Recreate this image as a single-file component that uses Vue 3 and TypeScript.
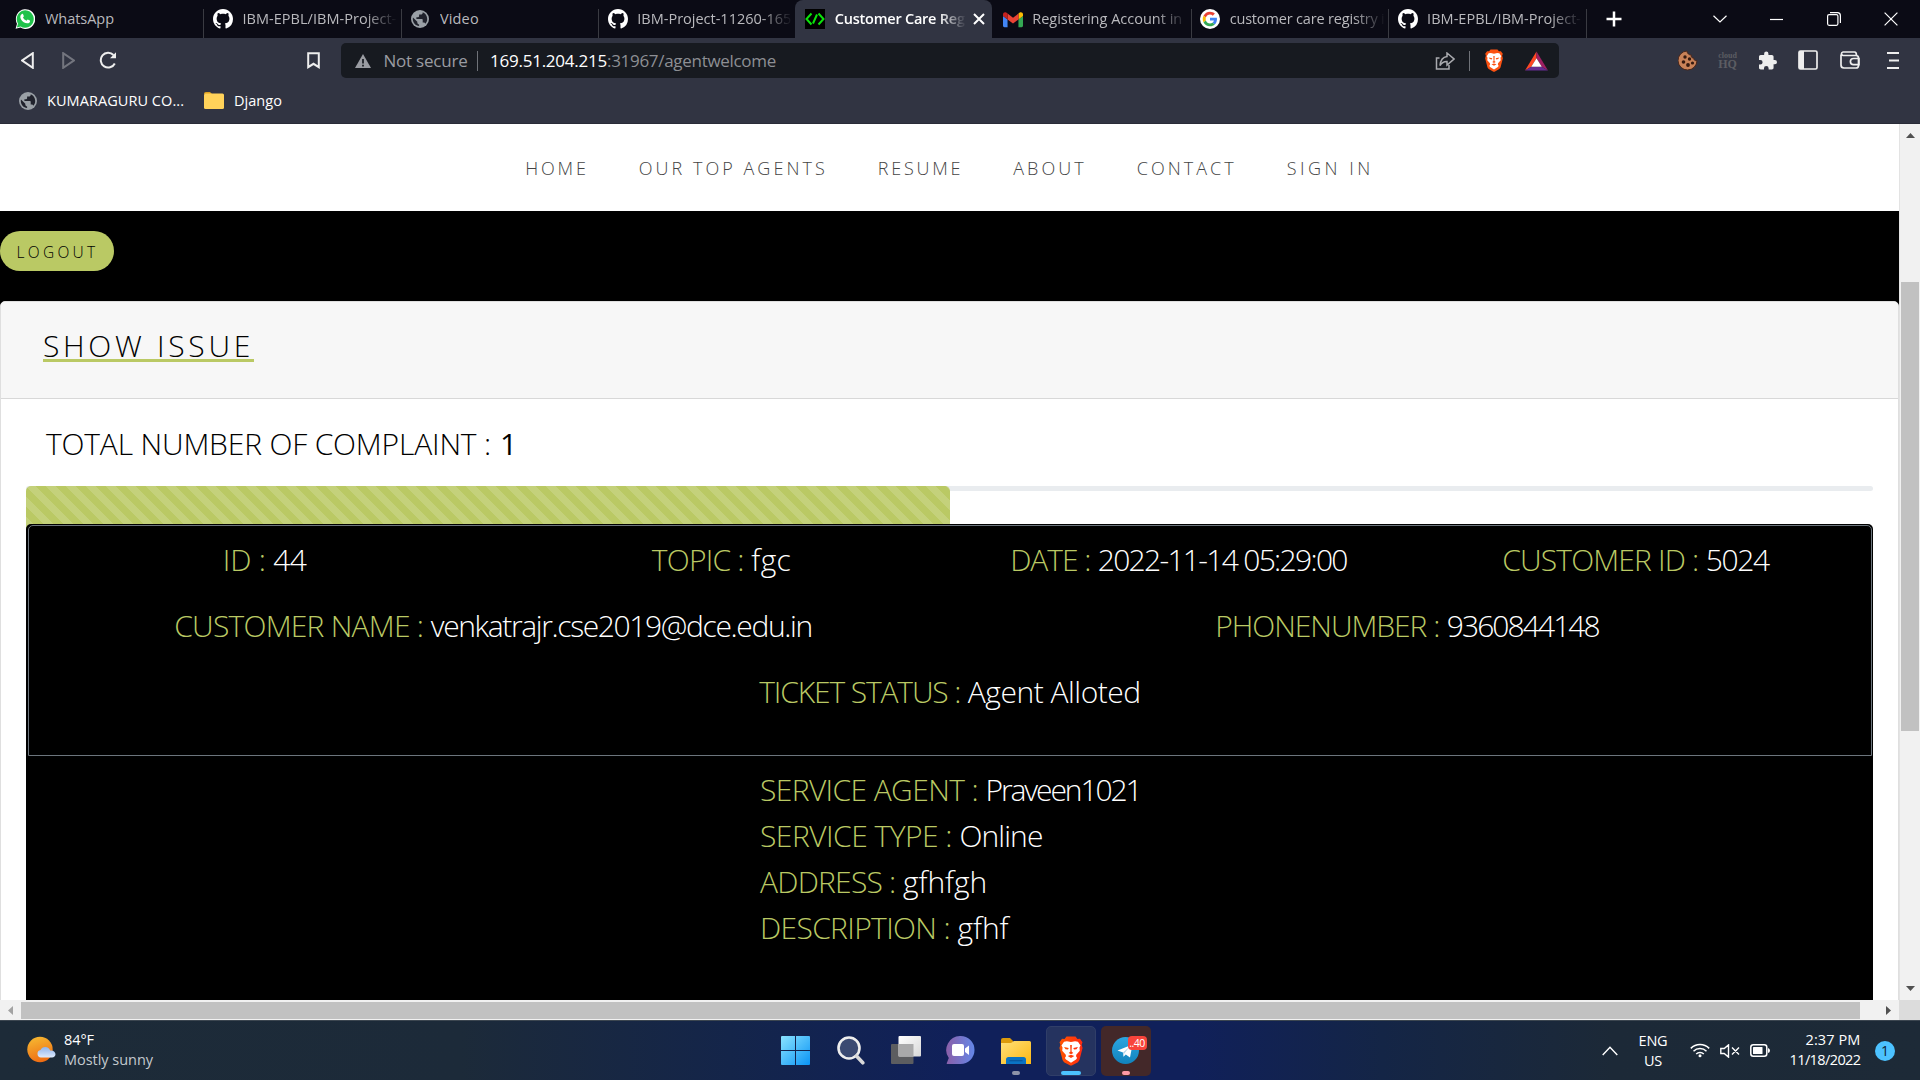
<script setup lang="ts">
import type { Directive } from 'vue'

/* Tracks a run of text so that it fills the given width in pixels. */
const vFit: Directive<HTMLElement, number> = {
  mounted(el, binding) {
    const length = el.textContent?.length ?? 0
    if (!length) return
    const natural = el.getBoundingClientRect().width
    el.style.letterSpacing = `${(binding.value - natural) / length}px`
  },
}

interface Tab {
  icon: string
  title: string
  width: number
  active?: boolean
  fade?: boolean
}

const tabs: Tab[] = [
  { icon: 'whatsapp', title: 'WhatsApp', width: 69 },
  { icon: 'github', title: 'IBM-EPBL/IBM-Project-', width: 154, fade: true },
  { icon: 'globe', title: 'Video', width: 39 },
  { icon: 'github', title: 'IBM-Project-11260-165', width: 154, fade: true },
  { icon: 'code', title: 'Customer Care Reg', width: 130, active: true, fade: true },
  { icon: 'gmail', title: 'Registering Account in', width: 150, fade: true },
  { icon: 'google', title: 'customer care registry i', width: 155, fade: true },
  { icon: 'github', title: 'IBM-EPBL/IBM-Project-', width: 154, fade: true },
]

const links = [
  { text: 'HOME', width: 63.5 },
  { text: 'OUR TOP AGENTS', width: 189 },
  { text: 'RESUME', width: 85.5 },
  { text: 'ABOUT', width: 73.5 },
  { text: 'CONTACT', width: 100 },
  { text: 'SIGN IN', width: 87 },
]

interface Field {
  label: string
  value: string
  lw: number
  vw: number
}

const rows: Field[][] = [
  [
    { label: 'ID :', value: '44', lw: 43, vw: 33 },
    { label: 'TOPIC :', value: 'fgc', lw: 92, vw: 40 },
    { label: 'DATE :', value: '2022-11-14 05:29:00', lw: 80, vw: 249 },
    { label: 'CUSTOMER ID :', value: '5024', lw: 196, vw: 63 },
  ],
  [
    { label: 'CUSTOMER NAME :', value: 'venkatrajr.cse2019@dce.edu.in', lw: 249, vw: 381 },
    { label: 'PHONENUMBER :', value: '9360844148', lw: 224, vw: 152 },
  ],
  [{ label: 'TICKET STATUS :', value: 'Agent Alloted', lw: 201, vw: 173 }],
]

const service: Field[] = [
  { label: 'SERVICE AGENT :', value: 'Praveen1021', lw: 218, vw: 155 },
  { label: 'SERVICE TYPE :', value: 'Online', lw: 192, vw: 83 },
  { label: 'ADDRESS :', value: 'gfhfgh', lw: 135.5, vw: 84 },
  { label: 'DESCRIPTION :', value: 'gfhf', lw: 190, vw: 51 },
]
</script>

<template>
  <div class="screen">
    <svg width="0" height="0" class="defs">
      <defs>
        <linearGradient id="win" x1="0" y1="0" x2="1" y2="1">
          <stop offset="0" stop-color="#8ae3ff" /><stop offset="1" stop-color="#0a94f5" />
        </linearGradient>
        <linearGradient id="sun" x1=".3" y1="0" x2=".6" y2="1">
          <stop offset="0" stop-color="#f6b731" /><stop offset="1" stop-color="#ee6a12" />
        </linearGradient>
        <linearGradient id="cloud" x1="0" y1="0" x2="0" y2="1">
          <stop offset="0" stop-color="#8fb4ee" /><stop offset="1" stop-color="#dfeafc" />
        </linearGradient>
        <linearGradient id="chat" x1="0" y1="0" x2="1" y2="0">
          <stop offset="0" stop-color="#8a5fa8" /><stop offset="1" stop-color="#6487e8" />
        </linearGradient>
        <linearGradient id="fold" x1="0" y1="0" x2="1" y2="1">
          <stop offset="0" stop-color="#ffe07a" /><stop offset="1" stop-color="#fdb813" />
        </linearGradient>
        <linearGradient id="tg" x1="0" y1="0" x2="0" y2="1">
          <stop offset="0" stop-color="#2ca5e0" /><stop offset="1" stop-color="#1183bd" />
        </linearGradient>
        <linearGradient id="tv" x1="0" y1="0" x2="1" y2="1">
          <stop offset="0" stop-color="#fff" /><stop offset="1" stop-color="#d8d8d8" />
        </linearGradient>
        <linearGradient id="lionbg" x1="0" y1="0" x2="1" y2="0">
          <stop offset="0" stop-color="#ff5500" /><stop offset="1" stop-color="#ff2a12" />
        </linearGradient>
        <symbol id="lion" viewBox="0 0 24 28">
          <path d="M6 2.800 7.800.5h8.400L18 2.800l2.400-.2 2.300 3.200-.8 2.300.9 3.200-2.900 11.200-1.400 1.900-5.800 3.200h-1.400l-5.800-3.200-1.400-1.900L1.200 11.300l.9-3.200-.8-2.300 2.300-3.200z" />
          <path fill="#fff" d="M8.200 5 12 5.700l3.800-.7 2.700.3 2.400 3.500-1 2 .3 2.900-3.300 3.700-.2 1.600 1 1.600-1 1.400L12 25l-4.700-3-1-1.400 1-1.600-.2-1.600-3.300-3.700.3-2.900-1-2 2.400-3.500z" />
          <path d="m5.500 10.300 4.400.9-.7 1.500-2.300-.4zM18.500 10.300l-4.400.9.7 1.500 2.300-.4zM11.200 8.500h1.600l-.3 6 1.600 1.300-2.100 1.200-2.100-1.200 1.600-1.300zM8.900 18.600l3.100-1 3.100 1-3.100 1.900z" />
        </symbol>
        <symbol id="globe" viewBox="2 2 20 20">
          <circle cx="12" cy="12" r="10" fill="#9aa0a6" />
          <path class="land" d="M11 19.900c-4-.5-7-3.800-7-7.900 0-.6.100-1.200.200-1.800L9 15v1c0 1.100.9 2 2 2zM17.900 17.400c-.3-.8-1-1.400-1.900-1.400h-1v-3c0-.5-.4-1-1-1H8v-2h2c.5 0 1-.4 1-1V7h2c1.100 0 2-.9 2-2v-.4c2.900 1.200 5 4.100 5 7.400 0 2.100-.8 4-2.100 5.400z" />
        </symbol>
      </defs>
    </svg>

    <header class="tabs">
      <div v-for="(t, i) in tabs" :key="i" class="tab" :class="{ active: t.active, nosep: i === 3, first: i === 0 }">
        <svg v-if="t.icon === 'whatsapp'" class="fav" viewBox="0 0 20 20">
          <path d="M.6 19.800 2 14.700A9.700 9.900 0 1 1 5.500 18.500z" fill="#fff" />
          <path d="M1.900 18.500 3 14.600A8.500 8.700 0 1 1 5.700 17.400z" fill="#1fc24a" />
          <path d="M6.600 5.200c.9-.6 1.300-.4 1.600.4l.6 1.500c.2.6-.7 1.100-.8 1.500.7 1.500 1.900 2.500 3.400 3.100.5-.1.900-1.200 1.400-1.100l2.100 1c.4.3.1 1.600-.5 2.100-2.500 1.900-6.900-.7-8.300-3.200C5 8.600 4.900 6.400 6.600 5.200z" fill="#fff" />
        </svg>
        <svg v-else-if="t.icon === 'github'" class="fav" viewBox="0 0 16 16">
          <path fill="#fff" d="M8 0C3.580 0 0 3.580 0 8c0 3.540 2.290 6.530 5.470 7.590.4.070.55-.17.55-.38 0-.19-.01-.82-.01-1.490-2.010.37-2.530-.49-2.690-.94-.09-.23-.48-.94-.82-1.130-.28-.15-.68-.52-.01-.53.63-.01 1.080.58 1.230.82.72 1.210 1.870.87 2.330.66.070-.52.280-.87.510-1.070-1.780-.2-3.640-.89-3.640-3.950 0-.87.310-1.590.820-2.150-.08-.2-.36-1.020.080-2.120 0 0 .67-.21 2.200.82.640-.18 1.320-.27 2-.27s1.360.09 2 .27c1.530-1.040 2.200-.82 2.200-.82.440 1.100.160 1.920.080 2.120.510.560.820 1.270.820 2.150 0 3.070-1.870 3.750-3.650 3.950.290.250.540.730.540 1.480 0 1.070-.01 1.930-.01 2.200 0 .21.150.46.550.38A8.010 8.010 0 0 0 16 8c0-4.420-3.580-8-8-8z" />
        </svg>
        <svg v-else-if="t.icon === 'globe'" class="fav globe-fav"><use href="#globe" /></svg>
        <svg v-else-if="t.icon === 'code'" class="fav" viewBox="0 0 20 20">
          <rect width="20" height="20" />
          <path d="M6.500 4.500 1.500 10l5 5.500M13.500 4.500l5 5.500-5 5.500M12 5.500 8 14.500" fill="none" stroke="#0be30b" stroke-width="2" />
        </svg>
        <svg v-else-if="t.icon === 'gmail'" class="fav" viewBox="52 36 88 72">
          <path fill="#4285f4" d="M58 108h14V74L52 59v43c0 3.320 2.690 6 6 6" />
          <path fill="#34a853" d="M120 108h14c3.320 0 6-2.690 6-6V59l-20 15" />
          <path fill="#fbbc04" d="M120 48v26l20-15v-8c0-7.420-8.470-11.650-14.400-7.200" />
          <path fill="#ea4335" d="M72 74V48l24 18 24-18v26L96 92" />
          <path fill="#c5221f" d="M52 51v8l20 15V48l-5.600-4.200c-5.940-4.450-14.400-.22-14.400 7.200" />
        </svg>
        <svg v-else class="fav" viewBox="-9 -9 66 66">
          <circle cx="24" cy="24" r="33" fill="#fff" />
          <path fill="#ea4335" d="M24 9.500c3.540 0 6.710 1.220 9.210 3.600l6.850-6.850C35.900 2.380 30.470 0 24 0 14.620 0 6.510 5.380 2.560 13.220l7.980 6.190C12.430 13.720 17.740 9.500 24 9.500z" />
          <path fill="#4285f4" d="M46.980 24.550c0-1.570-.15-3.090-.38-4.550H24v9.020h12.940c-.58 2.960-2.260 5.480-4.780 7.180l7.730 6c4.510-4.180 7.090-10.360 7.090-17.650z" />
          <path fill="#fbbc05" d="M10.530 28.590c-.48-1.450-.76-2.990-.76-4.590s.27-3.140.76-4.590l-7.980-6.190C.92 16.460 0 20.120 0 24c0 3.880.92 7.540 2.560 10.780l7.970-6.190z" />
          <path fill="#34a853" d="M24 48c6.480 0 11.930-2.130 15.890-5.810l-7.730-6c-2.150 1.450-4.920 2.300-8.160 2.300-6.260 0-11.570-4.220-13.470-9.910l-7.980 6.190C6.510 42.620 14.620 48 24 48z" />
        </svg>
        <div class="title" :class="{ fade: t.fade }"><span v-fit="t.width">{{ t.title }}</span></div>
        <svg v-if="t.active" class="x" viewBox="0 0 12 12"><path d="m1 1 10 10M11 1 1 11" stroke="#fff" stroke-width="2" /></svg>
      </div>
      <svg class="plus" viewBox="0 0 16 16"><path d="M8 .5v15M.5 8h15" stroke="#fff" stroke-width="2.500" /></svg>
      <div class="winctl">
        <svg width="14" height="8" viewBox="0 0 14 8"><path d="m.5.7 6.500 6.300L13.500.7" /></svg>
        <svg width="14" height="14" viewBox="0 0 14 14"><path d="M0 7.500h13" /></svg>
        <svg width="14" height="14" viewBox="0 0 14 14"><rect x=".6" y="2.600" width="10.300" height="10.700" rx="1.500" /><path d="M3 .7h7.500a3 3 0 0 1 2.900 3V11" /></svg>
        <svg width="14" height="14" viewBox="0 0 14 14"><path d="m.6.6 12.800 12.800M13.400.6.6 13.400" /></svg>
      </div>
    </header>

    <div class="toolbar">
      <svg class="back" viewBox="0 0 13 17"><path d="M11.800 1.200v14.600L1.200 8.500z" /></svg>
      <svg class="fwd" viewBox="0 0 13 17"><path d="M1.200 1.200v14.600l10.600-7.300z" /></svg>
      <svg class="reload" viewBox="0 0 18 18"><path d="M15.800 12.500A7.400 7.400 0 1 1 14.500 4" /><path d="M17 1.200v6h-6z" fill="#eee" stroke="none" /></svg>
      <svg class="bm" viewBox="0 0 13 17"><path d="M1.200 1.200h10.600v14L6.500 11.800 1.200 15.200z" /></svg>
      <div class="omni">
        <svg class="warn" viewBox="0 0 16 14"><path d="M8 0l8 14H0z" fill="#9a9ca2" /><path d="M8 5v4.500M8 10.800v1.600" stroke="#171a20" stroke-width="1.700" /></svg>
        <span class="ns" v-fit="84">Not secure</span>
        <i class="bar b1"></i>
        <span class="host" v-fit="117">169.51.204.215</span><span class="path" v-fit="169">:31967/agentwelcome</span>
        <svg class="share" viewBox="0 0 20 18"><path d="M4.500 6H1.500v11h12.500v-4M12 1l7 6-7 6V9.500C9 9.300 7 10.500 5 13.500 5.500 8.500 8 5 12 4.500z" /></svg>
        <i class="bar b2"></i>
        <svg class="lion-s" fill="#fb5212"><use href="#lion" /></svg>
        <svg class="bat" viewBox="0 0 24 20"><path d="M12 0 0 20l6.500-4L12 7z" fill="#ff4724" /><path d="m12 0 12 20-6.500-4L12 7z" fill="#9e1f63" /><path d="M0 20h24l-6.500-4h-11z" fill="#662d91" /><path d="M12 7l5.500 9h-11z" fill="#fff" /></svg>
      </div>
      <div class="ext">
        <svg width="20" height="21" viewBox="0 0 20 21"><path d="M9 1a9.500 9.500 0 1 0 10 9.500c-2 .6-3.300-.5-3.200-2.400-2 0-3-1.300-2.500-3C11 5 9 3.500 9 1z" fill="#c98258" stroke="#49261a" /><g fill="#35190f"><circle cx="7" cy="7" r="1.700" /><circle cx="11.500" cy="9" r="1.700" /><circle cx="5.500" cy="12" r="1.800" /><circle cx="10" cy="15" r="1.900" /><circle cx="14.500" cy="13" r="1.600" /></g></svg>
        <div class="chq"><span>cloud</span><b>HQ</b></div>
        <svg class="puzzle" width="18" height="19" viewBox="2 1 21 21"><path fill="#eee" d="M20.500 11H19V7c0-1.100-.9-2-2-2h-4V3.500a2.500 2.500 0 0 0-5 0V5H4c-1.100 0-2 .9-2 2v3.800h1.500a2.700 2.700 0 0 1 0 5.400H2V20c0 1.100.9 2 2 2h3.800v-1.500a2.700 2.700 0 0 1 5.400 0V22H17c1.100 0 2-.9 2-2v-4h1.500a2.500 2.500 0 0 0 0-5z" /></svg>
        <svg class="side" width="20" height="20" viewBox="0 0 20 20"><rect x="1" y="1" width="18" height="18" rx="1.500" fill="none" stroke="#eee" stroke-width="1.700" /><path d="M1 1h5v18H1z" fill="#eee" /></svg>
        <svg class="wallet" width="20" height="18" viewBox="0 0 20 18" fill="none" stroke="#eee" stroke-width="1.700"><path d="M1 3.500V14c0 2 1 3 3 3h12c1.500 0 2.500-1 2.500-2.500V7c0-1.500-1-2.500-2.500-2.500H3A2 1.800 0 0 1 3 1h11.500c1.500 0 2 1 2 3.500M19 7.500h-5.500a3 3 0 0 0 0 6.200H19z" /></svg>
        <svg class="menu" width="12" height="17" viewBox="0 0 12 17"><path d="M0 1h12M2 8.500h10M0 16h12" stroke="#eee" stroke-width="1.800" /></svg>
      </div>
    </div>

    <div class="bookmarks">
      <svg class="bglobe"><use href="#globe" /></svg>
      <span class="bt1" v-fit="137">KUMARAGURU CO...</span>
      <svg class="bfold" viewBox="0 0 20 17"><path d="M0 2c0-1.300.7-2 2-2h4l2 2H0z" fill="#dda020" /><rect y="1.500" width="20" height="15.500" rx="1.500" fill="#ffd25a" /></svg>
      <span v-fit="48">Django</span>
    </div>

    <div class="view">
      <main class="page">
        <nav>
          <a v-for="l in links" :key="l.text" v-fit="l.width">{{ l.text }}</a>
        </nav>
        <section class="band">
          <button><span v-fit="82">LOGOUT</span></button>
        </section>
        <section class="card">
          <div class="head"><h2 v-fit="211">SHOW ISSUE</h2></div>
          <div class="body">
            <div class="total"><span v-fit="445">TOTAL NUMBER OF COMPLAINT :</span><b>1</b></div>
            <div class="progress"><div class="fill"></div></div>
            <div class="ticket">
              <div class="summary">
                <div v-for="(r, i) in rows" :key="i" class="row">
                  <div v-for="f in r" :key="f.label" class="cell">
                    <span class="label" v-fit="f.lw">{{ f.label }}</span><span class="value" v-fit="f.vw">{{ f.value }}</span>
                  </div>
                </div>
              </div>
              <div class="service">
                <div v-for="f in service" :key="f.label" class="line">
                  <span class="label" v-fit="f.lw">{{ f.label }}</span><span class="value" v-fit="f.vw">{{ f.value }}</span>
                </div>
              </div>
            </div>
          </div>
        </section>
      </main>
      <aside class="vbar">
        <svg viewBox="0 0 9 5"><path d="M4.500 0 9 5H0z" fill="#505050" /></svg>
        <i></i>
        <svg viewBox="0 0 9 5"><path d="M4.500 5 9 0H0z" fill="#505050" /></svg>
      </aside>
    </div>

    <div class="hbar">
      <svg class="la" viewBox="0 0 5 9"><path d="M0 4.500 5 0v9z" fill="#a3a3a3" /></svg>
      <i></i>
      <svg class="ra" viewBox="0 0 5 9"><path d="M5 4.500 0 0v9z" fill="#505050" /></svg>
      <div class="corner"></div>
    </div>

    <footer class="taskbar">
      <div class="weather">
        <svg width="29" height="28" viewBox="0 0 29 28"><circle cx="13" cy="13.500" r="12.700" fill="url(#sun)" /><path d="M14 21.500a3.800 3.800 0 0 1-.5-7.500 5.200 5.200 0 0 1 9.600.5c3.500-.5 5.400 1.800 5.400 3.800s-1.500 3.200-3.500 3.200z" fill="url(#cloud)" /></svg>
        <div><span v-fit="30">84°F</span><span class="dim" v-fit="89">Mostly sunny</span></div>
      </div>
      <div class="apps">
        <div class="app"><svg width="29" height="29" viewBox="0 0 29 29"><path fill="url(#win)" d="M1 0h13v14H0V1q0-1 1-1zM15 0h13q1 0 1 1v13H15zM0 15h14v14H1q-1 0-1-1zM15 15h14v13q0 1-1 1H15z" /></svg></div>
        <div class="app"><svg width="28" height="29" viewBox="0 0 28 29"><circle cx="12" cy="12" r="10.500" fill="#3b4a72" stroke="#eee" stroke-width="2.600" /><path d="m19.500 20 6.300 6.800" stroke="#d9d9d9" stroke-width="3.600" stroke-linecap="round" /></svg></div>
        <div class="app"><svg width="30" height="29" viewBox="0 0 30 29"><rect y="8" width="22.500" height="20" rx="1" fill="#5c5d60" /><rect x="7.500" width="22.500" height="20.500" rx="1" fill="url(#tv)" /><path d="M7.500 8h15v12.500h-15z" fill="#a9a9aa" /></svg></div>
        <div class="app"><svg width="29" height="29" viewBox="0 0 29 29"><path d="M14.500 0a14 14 0 1 1 0 28H1.500Q.2 28 1 26.500L2.800 22A14 14 0 0 1 14.500 0z" fill="url(#chat)" /><rect x="6" y="8" width="12" height="12" rx="2" fill="#fff" /><path d="m19 12.500 4-3v9.500l-4-3z" fill="#fff" /></svg></div>
        <div class="app"><svg width="30" height="26" viewBox="0 0 30 26"><path d="M0 2q0-2 2-2h7l3.500 3.500L10 7H0z" fill="#dc9a0c" /><path d="M0 5h10l3-2h15.500Q30 3 30 4.500V26H0z" fill="url(#fold)" /><path d="M5 26v-4.500q0-2.500 2.500-2.500h15q2.500 0 2.500 2.500V26z" fill="#0a73c4" /><path d="M8.500 22.700h13" stroke="#0a559b" stroke-width="1.200" /></svg><i class="pill"></i></div>
        <div class="app on"><svg width="26" height="30" fill="url(#lionbg)"><use href="#lion" /></svg><i class="pill wide"></i></div>
        <div class="app alert"><svg class="tgi" width="27" height="27" viewBox="0 0 27 27"><circle cx="13.500" cy="13.500" r="13.500" fill="url(#tg)" /><path d="M5.500 13.500 20.500 7.500 18 20.500l-4.200-3-2.300 2.300-.5-4.200z" fill="#fff" /><path d="m11 15.600 7-6.300-5.700 7.200-.8 3.300z" fill="#b7d7ea" /></svg><i class="pill pink"></i><span class="badge">..40</span></div>
      </div>
      <div class="tray">
        <svg class="up" viewBox="0 0 16 10"><path d="m.7 9 7.300-7.800L15.300 9" fill="none" stroke="#fff" stroke-width="1.400" /></svg>
        <div class="lang"><span v-fit="29">ENG</span><span v-fit="18">US</span></div>
        <svg class="wifi" viewBox="0 0 20 15" fill="none" stroke="#fff" stroke-width="1.500"><path d="M.8 5.400a13 13 0 0 1 18.400 0M3.500 8.300a9.200 9.200 0 0 1 13 0M6.200 11a5.400 5.400 0 0 1 7.600 0" /><circle cx="10" cy="12.700" r="1.500" fill="#fff" stroke="none" /></svg>
        <svg class="vol" viewBox="0 0 20 14" fill="none" stroke="#fff" stroke-width="1.400"><path d="M.8 4.500h3.400L8.500.9v12.200L4.200 9.500H.8zM12 3.500l7 7M19 3.500l-7 7" /></svg>
        <svg class="batt" viewBox="0 0 20 13"><rect x=".8" y=".8" width="16" height="11.400" rx="2.500" fill="none" stroke="#fff" stroke-width="1.500" /><rect x="3" y="3" width="9.500" height="7" rx=".6" fill="#fff" /><path d="M18 4v5q2-.5 2-2.500T18 4z" fill="#fff" /></svg>
        <div class="clock"><span v-fit="55">2:37 PM</span><span v-fit="71">11/18/2022</span></div>
        <div class="note">1</div>
      </div>
    </footer>
  </div>
</template>

<style>
body { margin: 0; overflow: hidden; }
</style>

<style scoped>
.screen {
  width: 1920px; height: 1080px; overflow: hidden;
  display: flex; flex-direction: column;
  font-family: "Open Sans", "Noto Sans", sans-serif; font-size: 14.500px;
  background: #313442; color: #fff;
}
.screen * { box-sizing: border-box; }
.defs { position: absolute; }
svg { display: block; flex: none; }
span, a, h2 { white-space: pre; flex: none; }
.land { fill: #20222c; }

.tabs { height: 38px; flex: none; background: #0b0b15; display: flex; padding-left: 6px; }
.tab { width: 197.450px; height: 38px; flex: none; display: flex; align-items: center; padding-left: 9.500px; color: #b9b9bd; position: relative; }
.tab::after { content: ""; width: 1px; height: 29px; background: #3a3b42; position: absolute; right: -1px; bottom: 0; }
.tab.first { padding-left: 8.500px; }
.tab.first .title { margin-left: 10.500px; }
.tab.active { background: #313442; border-radius: 8px 8px 0 0; color: #fff; font-weight: 600; margin-left: -1px; margin-right: 1px; padding-left: 10.500px; }
.tab.active::after, .tab.nosep::after { display: none; }
.fav { width: 20px; height: 20px; }
.globe-fav { width: 18px; height: 18px; margin: 0 1px; }
.title { margin-left: 9.500px; width: 154px; overflow: hidden; line-height: 22px; }
.fade { mask-image: linear-gradient(90deg, #000 80%, transparent 101%); }
.active .title { width: 130px; }
.x { width: 12px; height: 12px; margin-left: 8px; }
.plus { width: 16px; height: 16px; margin: 11px 0 0 20px; }
.winctl { margin-left: auto; padding-right: 22px; display: flex; gap: 43px; align-items: center; fill: none; stroke: #fff; stroke-width: 1.200; }

.toolbar { height: 44px; flex: none; display: flex; align-items: center; padding-left: 21px; }
.toolbar > svg { fill: none; stroke: #eee; stroke-width: 2; }
.back, .fwd, .bm { width: 13px; height: 17px; }
.fwd { margin-left: 28px; opacity: .35; }
.reload { width: 18px; height: 18px; margin-left: 24px; }
.bm { margin-left: 190px; }
.omni { width: 1218px; height: 35px; margin: 1px 0 0 21px; background: #171a20; border-radius: 5px; display: flex; align-items: center; font-size: 17px; padding-left: 14px; }
.warn { width: 16px; height: 14px; margin-top: 1px; }
.ns { margin-left: 12.500px; color: #9a9ca2; }
.bar { width: 1.500px; height: 20px; background: #6f7278; flex: none; }
.b1 { margin: 0 12px 0 9px; }
.path { color: #8d8f94; }
.share { width: 20px; height: 18px; margin-left: auto; fill: none; stroke: #a9aaae; stroke-width: 1.500; }
.b2 { margin: 0 14px; }
.lion-s { width: 20px; height: 23px; }
.bat { width: 23px; height: 20px; margin: 0 11px 0 21px; }
.ext { margin-left: auto; padding-right: 21.500px; display: flex; align-items: center; }
.chq { margin: 0 20.500px 0 19px; }
.side { margin-left: 21px; }
.wallet { margin: 0 26.500px 0 22px; }
.chq { width: 22px; font-family: "Liberation Serif", serif; color: #5c5d62; display: flex; flex-direction: column; align-items: center; font-weight: 700; }
.chq span { font-size: 8px; line-height: 7px; }
.chq b { font-size: 12px; line-height: 10px; }

.bookmarks { height: 42px; flex: none; display: flex; align-items: center; padding: 0 0 4px 19px; border-bottom: 1px solid #292b37; }
.bglobe { width: 18px; height: 18px; }
.bt1 { margin: 0 20px 0 10px; }
.bfold { width: 20px; height: 17px; margin-right: 10px; }

.view { height: 876px; flex: none; display: flex; }
.page { width: 1899px; height: 876px; overflow: hidden; background: #fff; color: #000; font-weight: 300; }
nav { height: 87px; display: flex; justify-content: center; align-items: center; gap: 50px; padding-top: 1px; }
nav a { font-size: 18px; color: #444; }
.band { height: 90px; background: #000; padding-top: 20px; }
button { display: flex; align-items: center; width: 114px; height: 40px; border: 0; border-radius: 20px; background: #bac964; font: inherit; font-size: 15.500px; padding: 1px 0 0 16.500px; color: #000; }
.card { background: #fff; border: 1px solid #dfdfdf; border-radius: 5px; height: 720px; box-shadow: 0 -6px 0 0 #000; }
.head { height: 97px; background: #f7f7f7; border-bottom: 1px solid #d8d8d8; padding: 23px 0 0 42px; border-radius: 4px 4px 0 0; }
h2 { display: inline-block; margin: 0; font-size: 30px; font-weight: 300; line-height: 41px; border-bottom: 3px solid #bac964; height: 37px; }
.body { padding: 0 25px; }
.total { height: 87px; font-size: 30px; line-height: 90px; padding-left: 20px; display: flex; }
.total b { font-weight: 400; margin-left: 9px; }
.total span { display: block; }
.progress { height: 5px; background: #e9ecef; border-radius: 5px; }
.fill { width: 924px; height: 44px; border-radius: 5px 5px 0 0; background: linear-gradient(45deg, rgba(255,255,255,.15) 25%, transparent 25%, transparent 50%, rgba(255,255,255,.15) 50%, rgba(255,255,255,.15) 75%, transparent 75%, transparent) 0 0 / 20px 20px #bac964; }
.ticket { position: relative; margin-top: 33px; height: 480px; background: #000; border-radius: 5px 5px 0 0; padding: 1px 1px 0 2px; font-size: 30px; }
.summary { height: 231px; border: 1px solid #6c757d; border-radius: 5px 5px 0 0; padding: 0 7px; }
.row { display: flex; height: 66px; padding-top: 10px; }
.cell { flex: 1; display: flex; justify-content: center; line-height: 48px; }
.label { color: #bac964; margin-right: 7.500px; }
.value { color: #fff; }
.service { margin-top: 12px; padding-left: 732px; }
.line { display: flex; height: 46px; line-height: 44px; }

.vbar { width: 21px; background: #f1f1f1; border-left: 1px solid #e3e3e3; display: flex; flex-direction: column; align-items: center; padding: 9px 0; }
.vbar svg { width: 9px; height: 5px; }
.vbar i { width: 18px; height: 449px; background: #c1c1c1; margin: 144px 0 auto; }
.hbar { height: 20px; flex: none; background: #f1f1f1; display: flex; align-items: center; }
.hbar svg { width: 5px; height: 9px; }
.la { margin: 0 8px; }
.hbar i { width: 1839px; height: 17px; background: #c1c1c1; }
.ra { margin-left: 26px; }
.corner { width: 21px; height: 20px; margin-left: auto; background: #dcdcdc; }

.taskbar { height: 60px; flex: none; border-top: 1px solid #3c4650; display: flex; align-items: center; background: linear-gradient(90deg, #1d2b38 0%, #1c2a39 24%, #14254a 38%, #10205a 50%, #10205a 62%, #142546 72%, #1c2937 84%, #1d2a37 100%); }
.weather { width: 770.500px; display: flex; padding-left: 27px; align-items: center; margin-top: -2px; }
.weather > div, .lang, .clock { display: flex; flex-direction: column; line-height: 20px; }
.weather > div { margin-left: 8px; align-items: flex-start; margin-top: 1px; }
.dim { color: #c3c9ce; }
.apps { display: flex; gap: 5px; }
.app { width: 50px; height: 50px; border-radius: 5px; display: flex; align-items: center; justify-content: center; position: relative; }
.on { background: #25335f; border: 1px solid #303e68; }
.alert { background: #432829; }
.tgi { margin-right: 1px; }
.pill { position: absolute; bottom: 1px; left: 21px; width: 8px; height: 4px; border-radius: 2px; background: #8d93a8; }
.wide { width: 20px; left: 14px; bottom: 0; background: #4cc2ff; }
.pink { background: #ff99a4; }
.badge { position: absolute; left: 27px; top: 10px; width: 19px; height: 14px; border-radius: 4px; background: #f8443b; font-size: 10.500px; line-height: 14px; text-align: center; letter-spacing: -.5px; }
.tray { margin-left: auto; display: flex; align-items: center; padding-right: 25px; }
.up { width: 16px; height: 10px; }
.lang { margin-left: 20px; align-items: center; width: 30px; }
.wifi { width: 20px; height: 15px; margin-left: 22px; }
.vol { width: 20px; height: 14px; margin-left: 10px; }
.batt { width: 20px; height: 13px; margin-left: 10px; }
.clock { margin-left: 18.500px; width: 72px; align-items: flex-end; margin-top: -1px; }
.note { width: 20px; height: 20px; border-radius: 50%; background: #4cc2ff; color: #0c2233; margin-left: 14.500px; text-align: center; line-height: 20px; font-size: 14px; }
</style>
